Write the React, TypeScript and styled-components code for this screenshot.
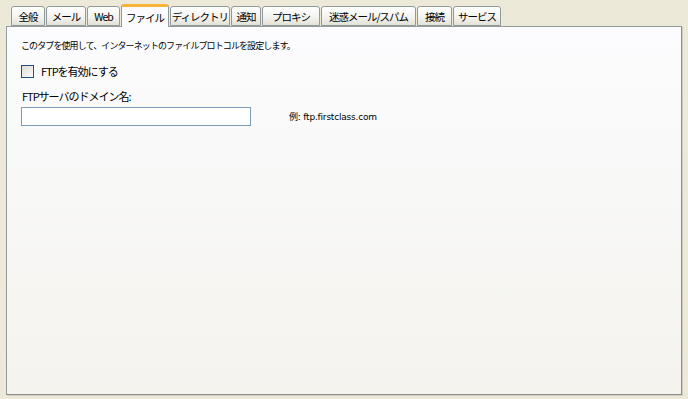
import styled, { createGlobalStyle } from 'styled-components';

const GlobalStyle = createGlobalStyle`
  html, body {
    margin: 0;
    padding: 0;
    background: #ece9d8;
  }
`;

const Window = styled.div`
  width: 688px;
  height: 399px;
  box-sizing: border-box;
  padding: 3px 6px 0 6px;
  background: #ece9d8;
  font-family: 'Noto Sans CJK JP', 'Liberation Sans', sans-serif;
  color: #000;
  display: flex;
  flex-direction: column;
`;

const TabStrip = styled.div`
  display: flex;
  align-items: flex-end;
  height: 23px;
  padding-left: 4px;
  position: relative;
  z-index: 1;
`;

const Tab = styled.div<{ $w: number; $active?: boolean }>`
  box-sizing: border-box;
  width: ${(p) => p.$w}px;
  height: ${(p) => (p.$active ? 23 : 20)}px;
  margin-left: 1px;
  margin-bottom: ${(p) => (p.$active ? -1 : 0)}px;
  border: 1px solid #919b9c;
  border-bottom: ${(p) => (p.$active ? 'none' : '1px solid #919b9c')};
  border-top: ${(p) => (p.$active ? '3px solid #f7b43a' : '1px solid #919b9c')};
  border-radius: 3px 3px 0 0;
  background: ${(p) =>
    p.$active ? '#fcfcfe' : 'linear-gradient(#ffffff, #f2f2ee 60%, #e3e1d7)'};
  display: flex;
  align-items: center;
  justify-content: center;
  font-size: 10.5px;
  letter-spacing: -1px;
  white-space: nowrap;
  padding-top: ${(p) => (p.$active ? 1 : 0)}px;
`;

const Panel = styled.div`
  box-sizing: border-box;
  width: 676px;
  height: 369px;
  border: 1px solid #919b9c;
  border-right-color: #8b9091;
  border-bottom-color: #8b9091;
  box-shadow: 1px 1px 0 #d0cdbf;
  background: linear-gradient(#fcfcfe, #f4f3ee);
  padding: 12px 14px;
  display: flex;
  flex-direction: column;
`;

const Intro = styled.div`
  font-size: 9px;
  letter-spacing: -0.9px;
  line-height: 14px;
`;

const CheckRow = styled.label`
  display: flex;
  align-items: center;
  gap: 7px;
  margin-top: 10px;
  font-size: 11px;
  letter-spacing: -1px;
`;

const CheckBox = styled.span`
  box-sizing: border-box;
  width: 13px;
  height: 13px;
  border: 1px solid #1c5180;
  background: linear-gradient(135deg, #dcdcd6, #fbfbf9);
`;

const FieldLabel = styled.div`
  margin-top: 9px;
  padding-left: 1px;
  font-size: 11px;
  letter-spacing: -1px;
  line-height: 16px;
`;

const FieldRow = styled.div`
  display: flex;
  align-items: center;
  margin-top: 3px;
`;

const TextBox = styled.div`
  box-sizing: border-box;
  width: 230px;
  height: 19px;
  border: 1px solid #7f9db9;
  background: #ffffff;
`;

const Hint = styled.div`
  margin-left: 38px;
  font-size: 9px;
  font-family: 'DejaVu Sans', 'Noto Sans CJK JP', sans-serif;
  letter-spacing: -0.2px;
`;

const tabs: { label: string; w: number; active?: boolean }[] = [
  { label: '全般', w: 34 },
  { label: 'メール', w: 40 },
  { label: 'Web', w: 33 },
  { label: 'ファイル', w: 48, active: true },
  { label: 'ディレクトリ', w: 60 },
  { label: '通知', w: 30 },
  { label: 'プロキシ', w: 58 },
  { label: '迷惑メール/スパム', w: 95 },
  { label: '接続', w: 35 },
  { label: 'サービス', w: 48 },
];

export default function App() {
  return (
    <>
      <GlobalStyle />
      <Window>
        <TabStrip>
          {tabs.map((t) => (
            <Tab key={t.label} $w={t.w} $active={t.active}>
              {t.label}
            </Tab>
          ))}
        </TabStrip>
        <Panel>
          <Intro>このタブを使用して、インターネットのファイルプロトコルを設定します。</Intro>
          <CheckRow>
            <CheckBox />
            FTPを有効にする
          </CheckRow>
          <FieldLabel>FTPサーバのドメイン名:</FieldLabel>
          <FieldRow>
            <TextBox />
            <Hint>例: ftp.firstclass.com</Hint>
          </FieldRow>
        </Panel>
      </Window>
    </>
  );
}
